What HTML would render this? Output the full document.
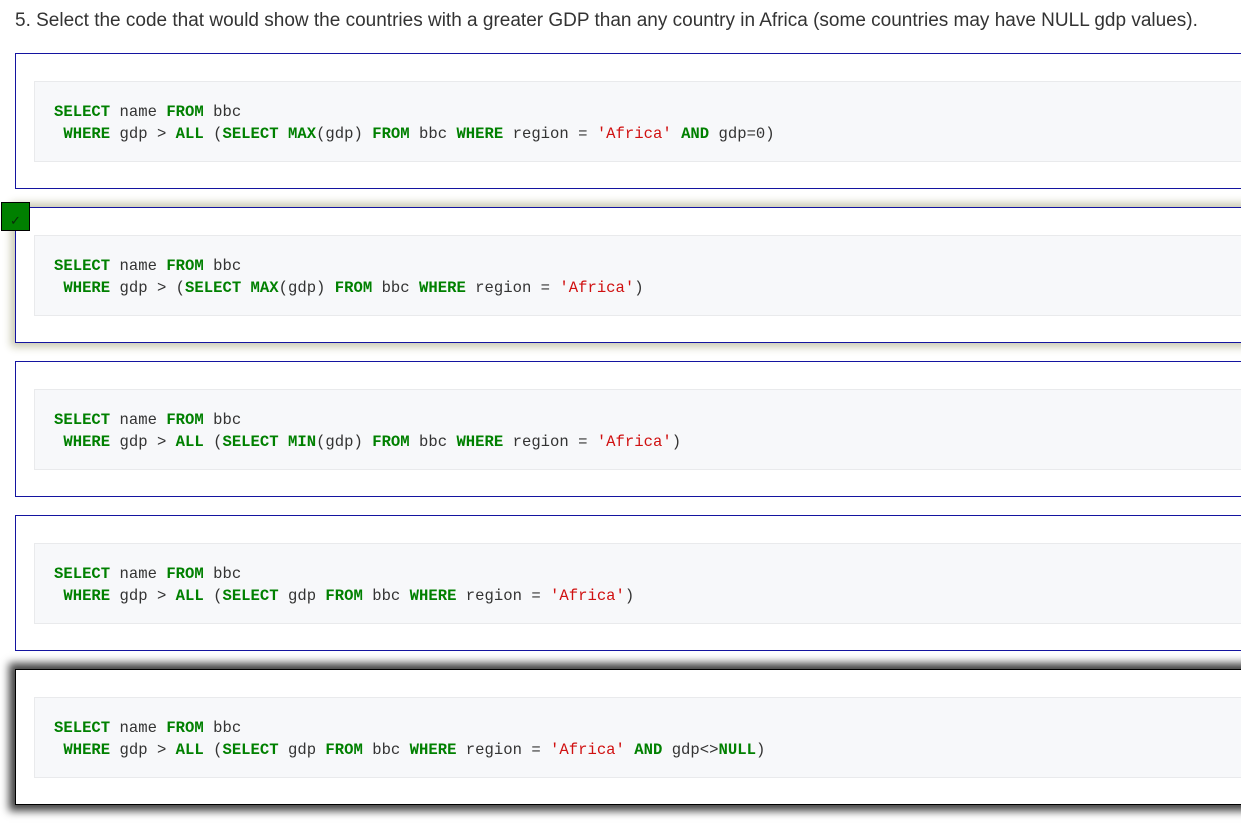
<!DOCTYPE html>
<html><head><meta charset="utf-8"><style>
body{margin:0;background:#fff;width:1241px;height:825px;overflow:hidden;position:relative;font-family:"Liberation Sans",sans-serif}
.q{position:absolute;left:15px;top:10px;font-size:19px;color:#333;white-space:nowrap}
.box{position:absolute;left:15px;width:1240px;height:134px;border:1px solid #1414a0;background:#fff}
.pre{position:absolute;left:18px;top:27px;width:1240px;height:81px;background:#f7f8fa;border:1px solid #e9eaec;box-sizing:border-box}
.code{position:absolute;left:19px;top:19px;font-family:"Liberation Mono","Noto Serif CJK SC",monospace;font-size:15.6px;line-height:22px;color:#333;white-space:pre}
.k{color:#008000;font-weight:bold}
.s{color:#d01010}
.b2{box-shadow:0 0 8px 4px #c8c8b0}
.b5{border-color:#000;box-shadow:0 0 8px 6px #444}
.chk{position:absolute;left:1px;top:202px;width:27px;height:27px;background:#008000;border:1px solid #000;color:#0a2a0a;font-size:13px;line-height:36px;text-align:center}
</style></head><body>
<div class="q">5. Select the code that would show the countries with a greater GDP than any country in Africa (some countries may have NULL gdp values).</div>

<div class="box" style="top:53px"><div class="pre"><div class="code"><span class="k">SELECT</span> name <span class="k">FROM</span> bbc
 <span class="k">WHERE</span> gdp &gt; <span class="k">ALL</span> (<span class="k">SELECT</span> <span class="k">MAX</span>(gdp) <span class="k">FROM</span> bbc <span class="k">WHERE</span> region = <span class="s">'Africa'</span> <span class="k">AND</span> gdp=0)</div></div></div>

<div class="box b2" style="top:207px"><div class="pre"><div class="code"><span class="k">SELECT</span> name <span class="k">FROM</span> bbc
 <span class="k">WHERE</span> gdp &gt; (<span class="k">SELECT</span> <span class="k">MAX</span>(gdp) <span class="k">FROM</span> bbc <span class="k">WHERE</span> region = <span class="s">'Africa'</span>)</div></div></div>
<div class="chk">✓</div>

<div class="box" style="top:361px"><div class="pre"><div class="code"><span class="k">SELECT</span> name <span class="k">FROM</span> bbc
 <span class="k">WHERE</span> gdp &gt; <span class="k">ALL</span> (<span class="k">SELECT</span> <span class="k">MIN</span>(gdp) <span class="k">FROM</span> bbc <span class="k">WHERE</span> region = <span class="s">'Africa'</span>)</div></div></div>

<div class="box" style="top:515px"><div class="pre"><div class="code"><span class="k">SELECT</span> name <span class="k">FROM</span> bbc
 <span class="k">WHERE</span> gdp &gt; <span class="k">ALL</span> (<span class="k">SELECT</span> gdp <span class="k">FROM</span> bbc <span class="k">WHERE</span> region = <span class="s">'Africa'</span>)</div></div></div>

<div class="box b5" style="top:669px"><div class="pre"><div class="code"><span class="k">SELECT</span> name <span class="k">FROM</span> bbc
 <span class="k">WHERE</span> gdp &gt; <span class="k">ALL</span> (<span class="k">SELECT</span> gdp <span class="k">FROM</span> bbc <span class="k">WHERE</span> region = <span class="s">'Africa'</span> <span class="k">AND</span> gdp&lt;&gt;<span class="k">NULL</span>)</div></div></div>
</body></html>
